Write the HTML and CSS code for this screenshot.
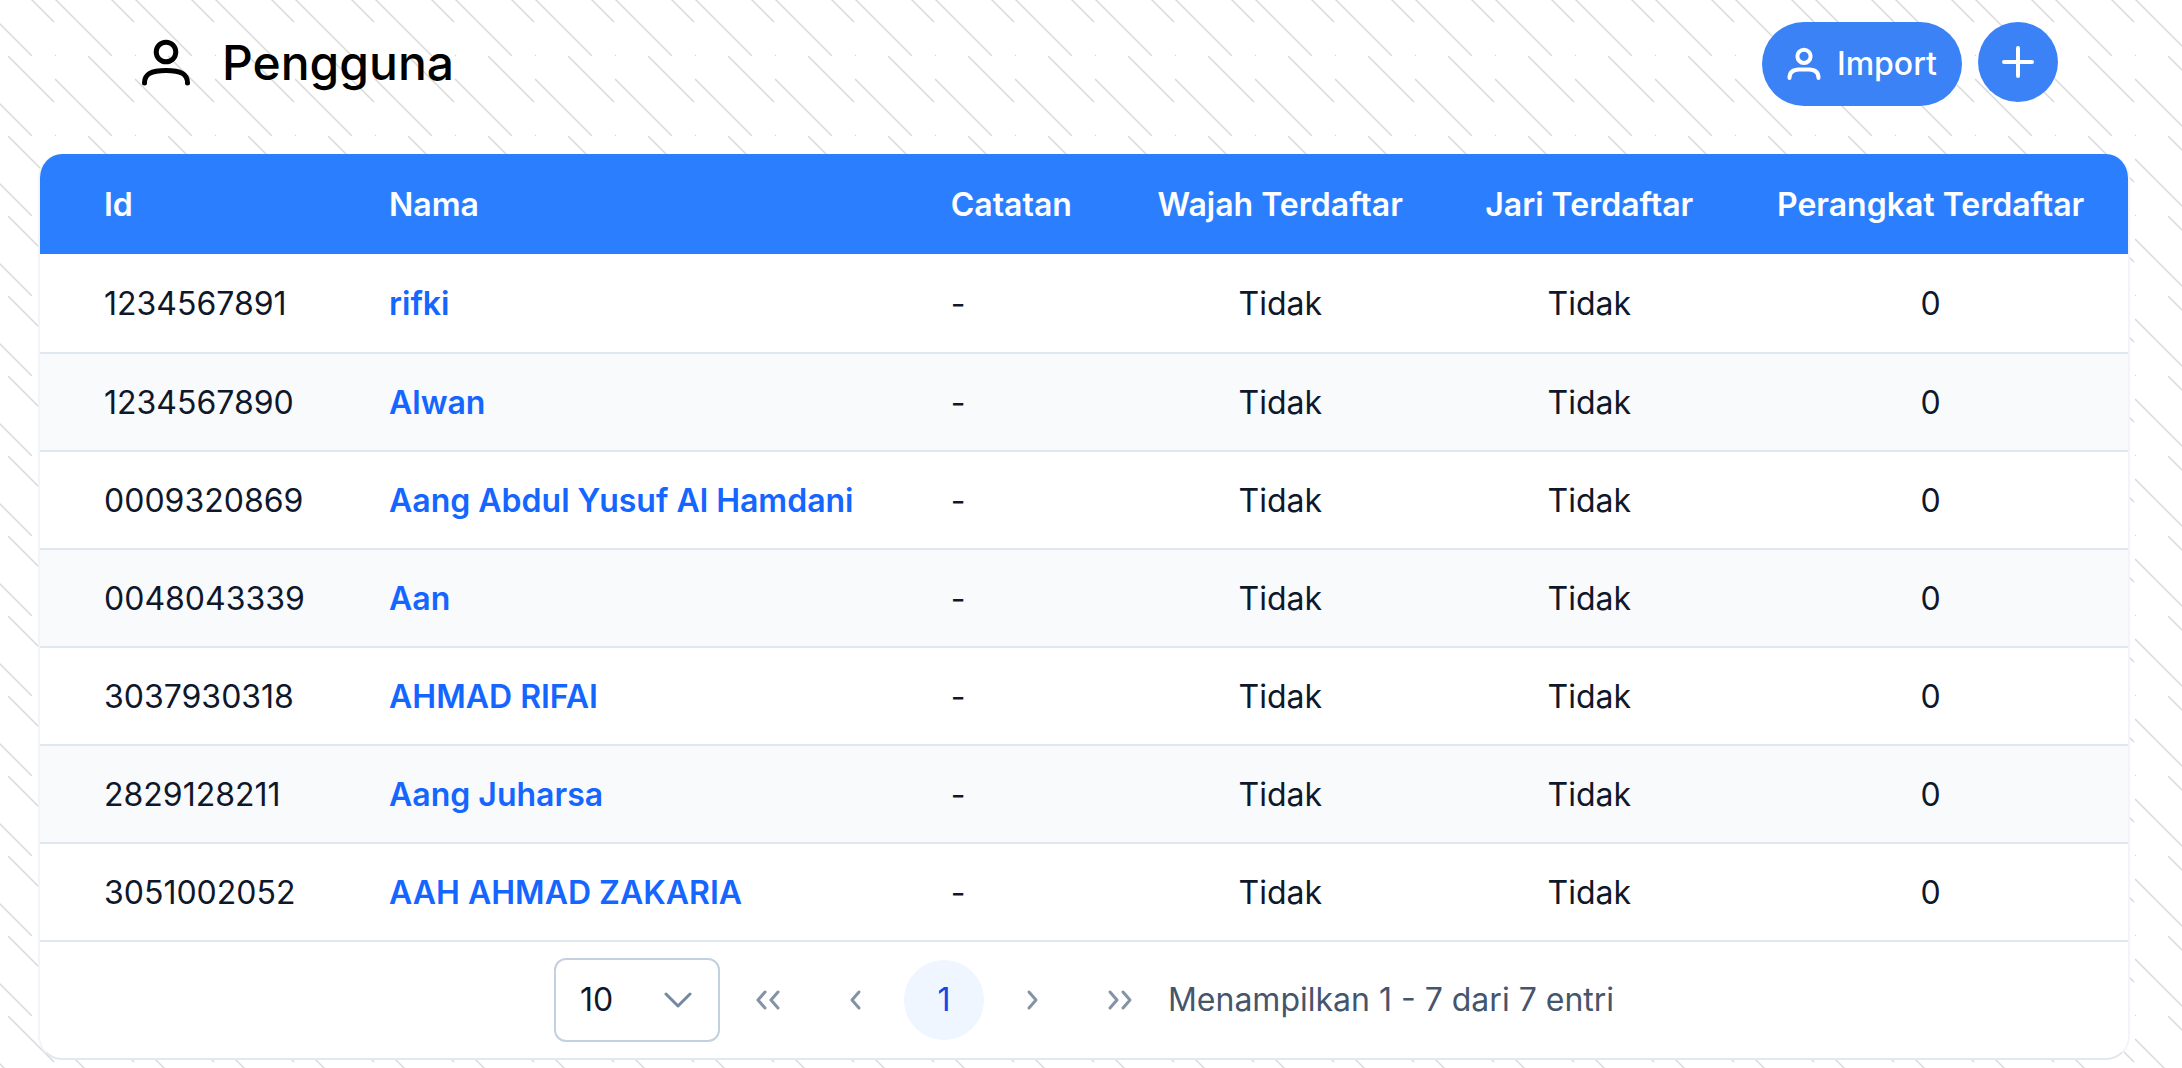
FILE: index.html
```
<!DOCTYPE html>
<html lang="id">

<head>
    <meta charset="UTF-8">
    <meta name="viewport" content="width=device-width, initial-scale=1.0">
    <title>Pengguna</title>
    <link rel="stylesheet" href="styles.css">
</head>

<body>
    <header class="page-header">
        <h1 class="page-title">
            <svg class="title-icon" viewBox="0 0 52 50" aria-hidden="true">
                <circle cx="26" cy="14" r="9.8" />
                <path d="M4.500 45C4.500 36 11 32.500 26 32.500S47.500 36 47.500 45" />
            </svg>
            Pengguna
        </h1>
        <div class="actions">
            <button type="button" class="btn">
                <svg class="btn-icon" viewBox="0 0 34 34" aria-hidden="true">
                    <circle cx="17" cy="9.300" r="6.600" />
                    <path d="M2.500 31C2.500 25 6 22.500 12 22.500H22C28 22.500 31.500 25 31.500 31" />
                </svg>
                Import
            </button>
            <button type="button" class="btn btn-round" aria-label="Tambah">
                <svg class="btn-icon" viewBox="0 0 34 34" aria-hidden="true">
                    <path d="M17 3V31M3 17H31" />
                </svg>
            </button>
        </div>
    </header>

    <main class="panel">
        <table class="users">
            <colgroup>
                <col class="col-id">
                <col class="col-name">
                <col class="col-note">
                <col class="col-face">
                <col class="col-finger">
                <col class="col-device">
            </colgroup>
            <thead>
                <tr>
                    <th>Id</th>
                    <th>Nama</th>
                    <th>Catatan</th>
                    <th class="center">Wajah Terdaftar</th>
                    <th class="center">Jari Terdaftar</th>
                    <th class="center">Perangkat Terdaftar</th>
                </tr>
            </thead>
            <tbody>
                <tr>
                    <td>1234567891</td>
                    <td><a href="#">rifki</a></td>
                    <td>-</td>
                    <td class="center">Tidak</td>
                    <td class="center">Tidak</td>
                    <td class="center">0</td>
                </tr>
                <tr>
                    <td>1234567890</td>
                    <td><a href="#">Alwan</a></td>
                    <td>-</td>
                    <td class="center">Tidak</td>
                    <td class="center">Tidak</td>
                    <td class="center">0</td>
                </tr>
                <tr>
                    <td>0009320869</td>
                    <td><a href="#">Aang Abdul Yusuf Al Hamdani</a></td>
                    <td>-</td>
                    <td class="center">Tidak</td>
                    <td class="center">Tidak</td>
                    <td class="center">0</td>
                </tr>
                <tr>
                    <td>0048043339</td>
                    <td><a href="#">Aan</a></td>
                    <td>-</td>
                    <td class="center">Tidak</td>
                    <td class="center">Tidak</td>
                    <td class="center">0</td>
                </tr>
                <tr>
                    <td>3037930318</td>
                    <td><a href="#">AHMAD RIFAI</a></td>
                    <td>-</td>
                    <td class="center">Tidak</td>
                    <td class="center">Tidak</td>
                    <td class="center">0</td>
                </tr>
                <tr>
                    <td>2829128211</td>
                    <td><a href="#">Aang Juharsa</a></td>
                    <td>-</td>
                    <td class="center">Tidak</td>
                    <td class="center">Tidak</td>
                    <td class="center">0</td>
                </tr>
                <tr>
                    <td>3051002052</td>
                    <td><a href="#">AAH AHMAD ZAKARIA</a></td>
                    <td>-</td>
                    <td class="center">Tidak</td>
                    <td class="center">Tidak</td>
                    <td class="center">0</td>
                </tr>
            </tbody>
        </table>

        <nav class="paginator" aria-label="Halaman">
            <div class="page-size">
                <select id="page-size" aria-label="Baris per halaman">
                    <option>10</option>
                    <option>25</option>
                    <option>50</option>
                </select>
                <svg class="select-arrow" viewBox="0 0 28 28" aria-hidden="true">
                    <path d="M2 8L14 20L26 8" />
                </svg>
            </div>
            <button type="button" class="page-btn" aria-label="Halaman pertama">
                <svg viewBox="0 0 28 28" aria-hidden="true"><path d="M11 6L4 14L11 22M24 6L17 14L24 22" /></svg>
            </button>
            <button type="button" class="page-btn" aria-label="Sebelumnya">
                <svg viewBox="0 0 28 28" aria-hidden="true"><path d="M17 6L10 14L17 22" /></svg>
            </button>
            <button type="button" class="page-btn active">1</button>
            <button type="button" class="page-btn" aria-label="Berikutnya">
                <svg viewBox="0 0 28 28" aria-hidden="true"><path d="M11 6L18 14L11 22" /></svg>
            </button>
            <button type="button" class="page-btn" aria-label="Halaman terakhir">
                <svg viewBox="0 0 28 28" aria-hidden="true"><path d="M4 6L11 14L4 22M17 6L24 14L17 22" /></svg>
            </button>
            <span class="summary">Menampilkan 1 - 7 dari 7 entri</span>
        </nav>
    </main>
</body>

</html>
```

FILE: styles.css
```
* {
    box-sizing: border-box;
}

body {
    margin: 0;
    padding: 22px 52px 8px 38px;
    font-family: Inter, sans-serif;
    font-size: 32px;
    line-height: 48px;
    color: #0f172b;
    background-color: #fff;
    background-image: url("data:image/svg+xml,%3Csvg xmlns='http://www.w3.org/2000/svg' width='80' height='80'%3E%3Cpath d='M8 56L54 102M8 -24L54 22M55 79L112 136M55 -1L112 56M-25 -1L32 56M55 55L56 56' stroke='%23dadada' stroke-width='1.500' fill='none'/%3E%3C/svg%3E");
}

svg {
    fill: none;
    stroke: currentColor;
    stroke-linecap: round;
    stroke-linejoin: round;
}

.page-header {
    display: flex;
    justify-content: space-between;
    align-items: flex-start;
    height: 132px;
    padding: 0 72px 0 102px;
}

.page-title {
    display: flex;
    align-items: center;
    gap: 30px;
    margin: 0;
    font-size: 48px;
    font-weight: 500;
    line-height: 82px;
    color: #000;
}

.title-icon {
    width: 52px;
    height: 50px;
    stroke-width: 5;
}

.actions {
    display: flex;
    align-items: flex-start;
    gap: 16px;
}

button {
    border: none;
    font: inherit;
    cursor: pointer;
}

.btn {
    display: flex;
    align-items: center;
    justify-content: center;
    gap: 16px;
    height: 84px;
    padding: 0 25px;
    border-radius: 42px;
    background-color: #3b82f6;
    color: #fff;
    font-weight: 500;
}

.btn-round {
    width: 80px;
    height: 80px;
    padding: 0;
}

.btn-icon {
    width: 34px;
    height: 34px;
    stroke-width: 4;
}

.panel {
    border: 2px solid #f1f5f9;
    border-top: none;
    border-bottom-color: #e2e8f0;
    border-radius: 24px;
    background-color: #fff;
    overflow: hidden;
}

.users {
    width: 100%;
    table-layout: fixed;
    border-collapse: separate;
    border-spacing: 0;
}

.col-id {
    width: 14.8%;
}

.col-name {
    width: 26.9%;
}

.col-note {
    width: 9.8%;
}

.col-face {
    width: 15.8%;
}

.col-finger {
    width: 13.8%;
}

.col-device {
    width: 18.9%;
}

th {
    height: 100px;
    padding: 2px 40px 0;
    background-color: #2b7fff;
    color: #fff;
    font-weight: 600;
    text-align: left;
    white-space: nowrap;
}

td {
    height: 98px;
    padding: 2px 40px 0;
    border-bottom: 2px solid #dfe7f0;
    white-space: nowrap;
}

th:first-child,
td:first-child {
    padding-left: 64px;
}

tbody tr:first-child td {
    height: 100px;
}

tbody tr:nth-child(even) {
    background-color: #f8fafc;
}

.users .center {
    padding-left: 0;
    padding-right: 0;
    text-align: center;
}

td a {
    color: #1565ff;
    font-weight: 600;
    text-decoration: none;
}

.paginator {
    display: flex;
    align-items: center;
    justify-content: center;
    gap: 8px;
    height: 116px;
}

.page-size {
    position: relative;
}

.page-size select {
    display: block;
    width: 166px;
    height: 84px;
    padding: 0 24px;
    appearance: none;
    border: 2px solid #c3d0e0;
    border-radius: 12px;
    background-color: #fff;
    color: #0f172b;
    font: inherit;
}

.select-arrow {
    position: absolute;
    top: 28px;
    right: 28px;
    width: 28px;
    height: 28px;
    stroke: #7488a3;
    stroke-width: 3;
    pointer-events: none;
}

.page-btn {
    display: flex;
    align-items: center;
    justify-content: center;
    width: 80px;
    height: 80px;
    padding: 0;
    border-radius: 50%;
    background: none;
    color: #8592a6;
}

.page-btn svg {
    width: 28px;
    height: 28px;
    stroke-width: 3;
}

.page-btn.active {
    background-color: #eff6ff;
    color: #1447e6;
}

.summary {
    color: #45556c;
}
```
